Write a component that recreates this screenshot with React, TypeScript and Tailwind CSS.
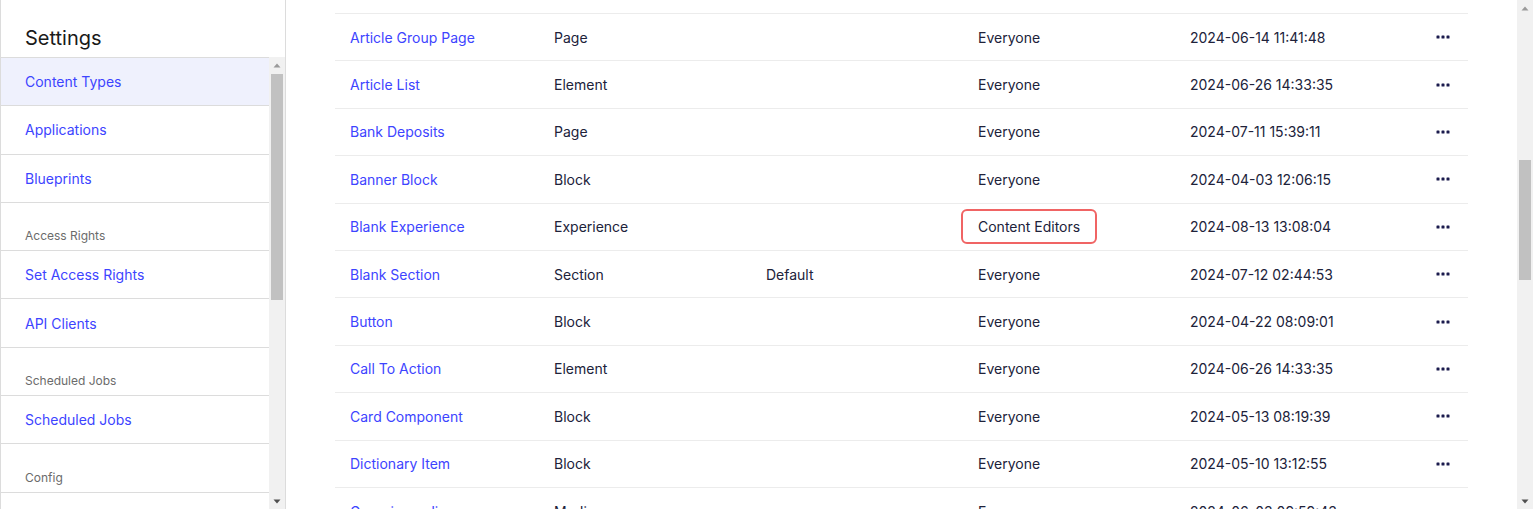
import React from 'react';

// sidebar entries: kind "link" or "group"
const navItems = [
  { kind: 'link', label: 'Content Types', active: true },
  { kind: 'link', label: 'Applications' },
  { kind: 'link', label: 'Blueprints' },
  { kind: 'group', label: 'Access Rights' },
  { kind: 'link', label: 'Set Access Rights' },
  { kind: 'link', label: 'API Clients' },
  { kind: 'group', label: 'Scheduled Jobs' },
  { kind: 'link', label: 'Scheduled Jobs' },
  { kind: 'group', label: 'Config' },
  { kind: 'link', label: '' },
];

const rows = [
  { name: 'Article Group Page', type: 'Page', extra: '', access: 'Everyone', date: '2024-06-14 11:41:48' },
  { name: 'Article List', type: 'Element', extra: '', access: 'Everyone', date: '2024-06-26 14:33:35' },
  { name: 'Bank Deposits', type: 'Page', extra: '', access: 'Everyone', date: '2024-07-11 15:39:11' },
  { name: 'Banner Block', type: 'Block', extra: '', access: 'Everyone', date: '2024-04-03 12:06:15' },
  { name: 'Blank Experience', type: 'Experience', extra: '', access: 'Content Editors', date: '2024-08-13 13:08:04', highlight: true },
  { name: 'Blank Section', type: 'Section', extra: 'Default', access: 'Everyone', date: '2024-07-12 02:44:53' },
  { name: 'Button', type: 'Block', extra: '', access: 'Everyone', date: '2024-04-22 08:09:01' },
  { name: 'Call To Action', type: 'Element', extra: '', access: 'Everyone', date: '2024-06-26 14:33:35' },
  { name: 'Card Component', type: 'Block', extra: '', access: 'Everyone', date: '2024-05-13 08:19:39' },
  { name: 'Dictionary Item', type: 'Block', extra: '', access: 'Everyone', date: '2024-05-10 13:12:55' },
  { name: 'Generic media', type: 'Media', extra: '', access: 'Everyone', date: '2024-06-03 09:59:43' },
];

const Dots = () => (
  <svg width="14" height="4" viewBox="0 0 14 4" className="block">
    <rect x="0.5" y="0.5" width="3" height="3" rx="0.6" fill="#1b1b4d" />
    <rect x="5.5" y="0.5" width="3" height="3" rx="0.6" fill="#1b1b4d" />
    <rect x="10.5" y="0.5" width="3" height="3" rx="0.6" fill="#1b1b4d" />
  </svg>
);

const ArrowUp = () => (
  <svg width="8" height="5" viewBox="0 0 8 5" className="block">
    <path d="M4 0.5 L7.5 4.5 L0.5 4.5 Z" fill="#9a9a9a" />
  </svg>
);

const ArrowDown = () => (
  <svg width="8" height="5" viewBox="0 0 8 5" className="block">
    <path d="M0.5 0.5 L7.5 0.5 L4 4.5 Z" fill="#505050" />
  </svg>
);

const ScrollBar: React.FC<{ before: string; thumb: string }> = ({ before, thumb }) => (
  <div className="w-[16px] h-full bg-[#f1f1f1] flex flex-col items-center shrink-0">
    <div className="h-[16px] w-full flex items-center justify-center">
      <ArrowUp />
    </div>
    <div className="flex-1 w-full flex flex-col">
      <div className={before} />
      <div className={`${thumb} mx-[2px] bg-[#c1c1c1]`} />
    </div>
    <div className="h-[16px] w-full flex items-center justify-center">
      <ArrowDown />
    </div>
  </div>
);

export default function App() {
  return (
    <div
      className="h-screen w-full overflow-hidden flex bg-white text-[14px] text-[#20223a]"
      style={{ fontFamily: 'Inter, "Noto Sans", sans-serif' }}
    >
      {/* sidebar */}
      <aside className="w-[286px] shrink-0 h-full flex flex-col border-l border-r border-[#dcdcdc]">
        <div className="h-[57px] pt-6 pl-6 shrink-0">
          <h1 className="text-[20px] leading-7 text-[#1a1a1a]">Settings</h1>
        </div>
        <div className="flex-1 flex min-h-0">
          <nav className="flex-1 border-t border-[#dcdcdc] overflow-hidden">
            {navItems.map((item, i) =>
              item.kind === 'group' ? (
                <div
                  key={i}
                  className="h-[48.3px] border-b border-[#dcdcdc] flex items-end pb-[6px] pl-6 text-[12px] leading-4 text-[#6b6b6b]"
                >
                  {item.label}
                </div>
              ) : (
                <div
                  key={i}
                  className={`h-[48.3px] border-b border-[#dcdcdc] flex items-center pl-6 text-[#3d44ff] ${
                    item.active ? 'bg-[#eff1fd]' : ''
                  }`}
                >
                  {item.label}
                </div>
              )
            )}
          </nav>
          <div className="h-full">
            <ScrollBar before="h-[1px]" thumb="h-[226px]" />
          </div>
        </div>
      </aside>

      {/* main */}
      <main className="flex-1 h-full px-[49px]">
        <div className="h-[14px] border-b border-[#ececec]" />
        {rows.map((r, i) => (
          <div
            key={i}
            className="h-[47.4px] border-b border-[#ececec] grid grid-cols-[204px_212px_212px_212px_212px_1fr] items-center"
          >
            <div className="pl-[15px] text-[#3d44ff] whitespace-nowrap">{r.name}</div>
            <div className="pl-[15px] whitespace-nowrap">{r.type}</div>
            <div className="pl-[15px] whitespace-nowrap">{r.extra}</div>
            <div className="pl-[15px] whitespace-nowrap">
              {r.highlight ? (
                <span className="inline-block -ml-[17px] px-[15px] py-[5px] border-2 border-[#f06464] rounded-[6px] leading-[21px]">
                  {r.access}
                </span>
              ) : (
                r.access
              )}
            </div>
            <div className="pl-[15px] whitespace-nowrap">{r.date}</div>
            <div className="flex justify-end pr-[18px]">
              <Dots />
            </div>
          </div>
        ))}
      </main>

      {/* page scrollbar */}
      <div className="h-full">
        <ScrollBar before="h-[144px]" thumb="h-[120px]" />
      </div>
    </div>
  );
}
